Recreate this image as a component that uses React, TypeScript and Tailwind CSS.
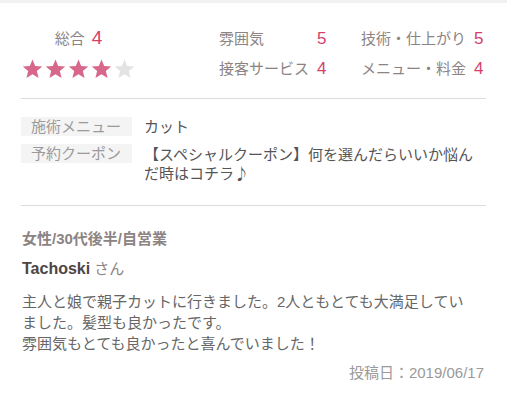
import React from "react";

const Star = ({ filled }: { filled: boolean }) => (
  <svg width="21" height="20" viewBox="0 0 24 23" className="block">
    <polygon
      points="12,0.5 15.1,8 23.2,8.6 17,13.9 19,21.8 12,17.5 5,21.8 7,13.9 0.8,8.6 8.9,8"
      fill={filled ? "#d8688b" : "#e3e3e3"}
    />
  </svg>
);

const Score = ({ label, value }: { label: string; value: string }) => (
  <>
    <div className="text-[#8c8383]">{label}</div>
    <div className="text-[#d43f6b] text-[17px]">{value}</div>
  </>
);

export default function App() {
  return (
    <div className="w-[507px] h-[400px] overflow-hidden bg-white font-['Liberation_Sans','Noto_Sans_CJK_JP',sans-serif] text-[15px]">
      <div className="h-[3px] bg-[#f2f1ef]" />
      <div className="px-[21px]">
        {/* ratings */}
        <div className="h-[96px] flex items-start border-b border-[#dcdcdc]">
          <div className="pt-[24px] pl-[1px] flex flex-col items-center w-[114px]">
            <div className="leading-[22px] text-[#8c8383] flex items-baseline">
              <span>総合</span>
              <span className="ml-[7px] text-[#d43f6b] text-[19px]">4</span>
            </div>
            <div className="mt-[9px] flex gap-[2px]">
              <Star filled />
              <Star filled />
              <Star filled />
              <Star filled />
              <Star filled={false} />
            </div>
          </div>
          <div className="ml-[84px] pt-[25px] grid content-start grid-cols-[98px_44px_113px_auto] gap-y-[8px] leading-[22px]">
            <Score label="雰囲気" value="5" />
            <Score label="技術・仕上がり" value="5" />
            <Score label="接客サービス" value="4" />
            <Score label="メニュー・料金" value="4" />
          </div>
        </div>

        {/* menu / coupon */}
        <div className="pt-[18px] pb-[23px] border-b border-[#dcdcdc] flex flex-col gap-[8px] leading-[19px]">
          <div className="flex items-start">
            <div className="w-[111px] h-[19px] shrink-0 bg-[#f4f4f4] pl-[10px] text-[#9a9a9a]">施術メニュー</div>
            <div className="ml-[12px] pr-[8px] text-[#555]">カット</div>
          </div>
          <div className="flex items-start">
            <div className="w-[111px] h-[19px] shrink-0 bg-[#f4f4f4] pl-[10px] text-[#9a9a9a]">予約クーポン</div>
            <div className="ml-[12px] pr-[8px] flex-1 text-[#555] font-['Noto_Sans_CJK_JP',sans-serif]">
              【スペシャルクーポン】何を選んだらいいか悩んだ時はコチラ♪
            </div>
          </div>
        </div>

        {/* review */}
        <div className="pt-[22px] pl-[1px] pr-[8px]">
          <div className="leading-[22px] font-bold text-[#8c8383]">女性/30代後半/自営業</div>
          <div className="mt-[8px] leading-[22px] text-[#8c8383]">
            <span className="font-bold text-[#4d4545] text-[16px]">Tachoski</span> さん
          </div>
          <div className="mt-[11px] leading-[21px] text-[#666]">
            主人と娘で親子カットに行きました。2人ともとても大満足していました。髪型も良かったです。
            <br />
            雰囲気もとても良かったと喜んでいました！
          </div>
          <div className="mt-[8px] leading-[22px] text-right text-[#9a9a9a] mr-[-6px]">
            投稿日：2019/06/17
          </div>
        </div>
      </div>
    </div>
  );
}
